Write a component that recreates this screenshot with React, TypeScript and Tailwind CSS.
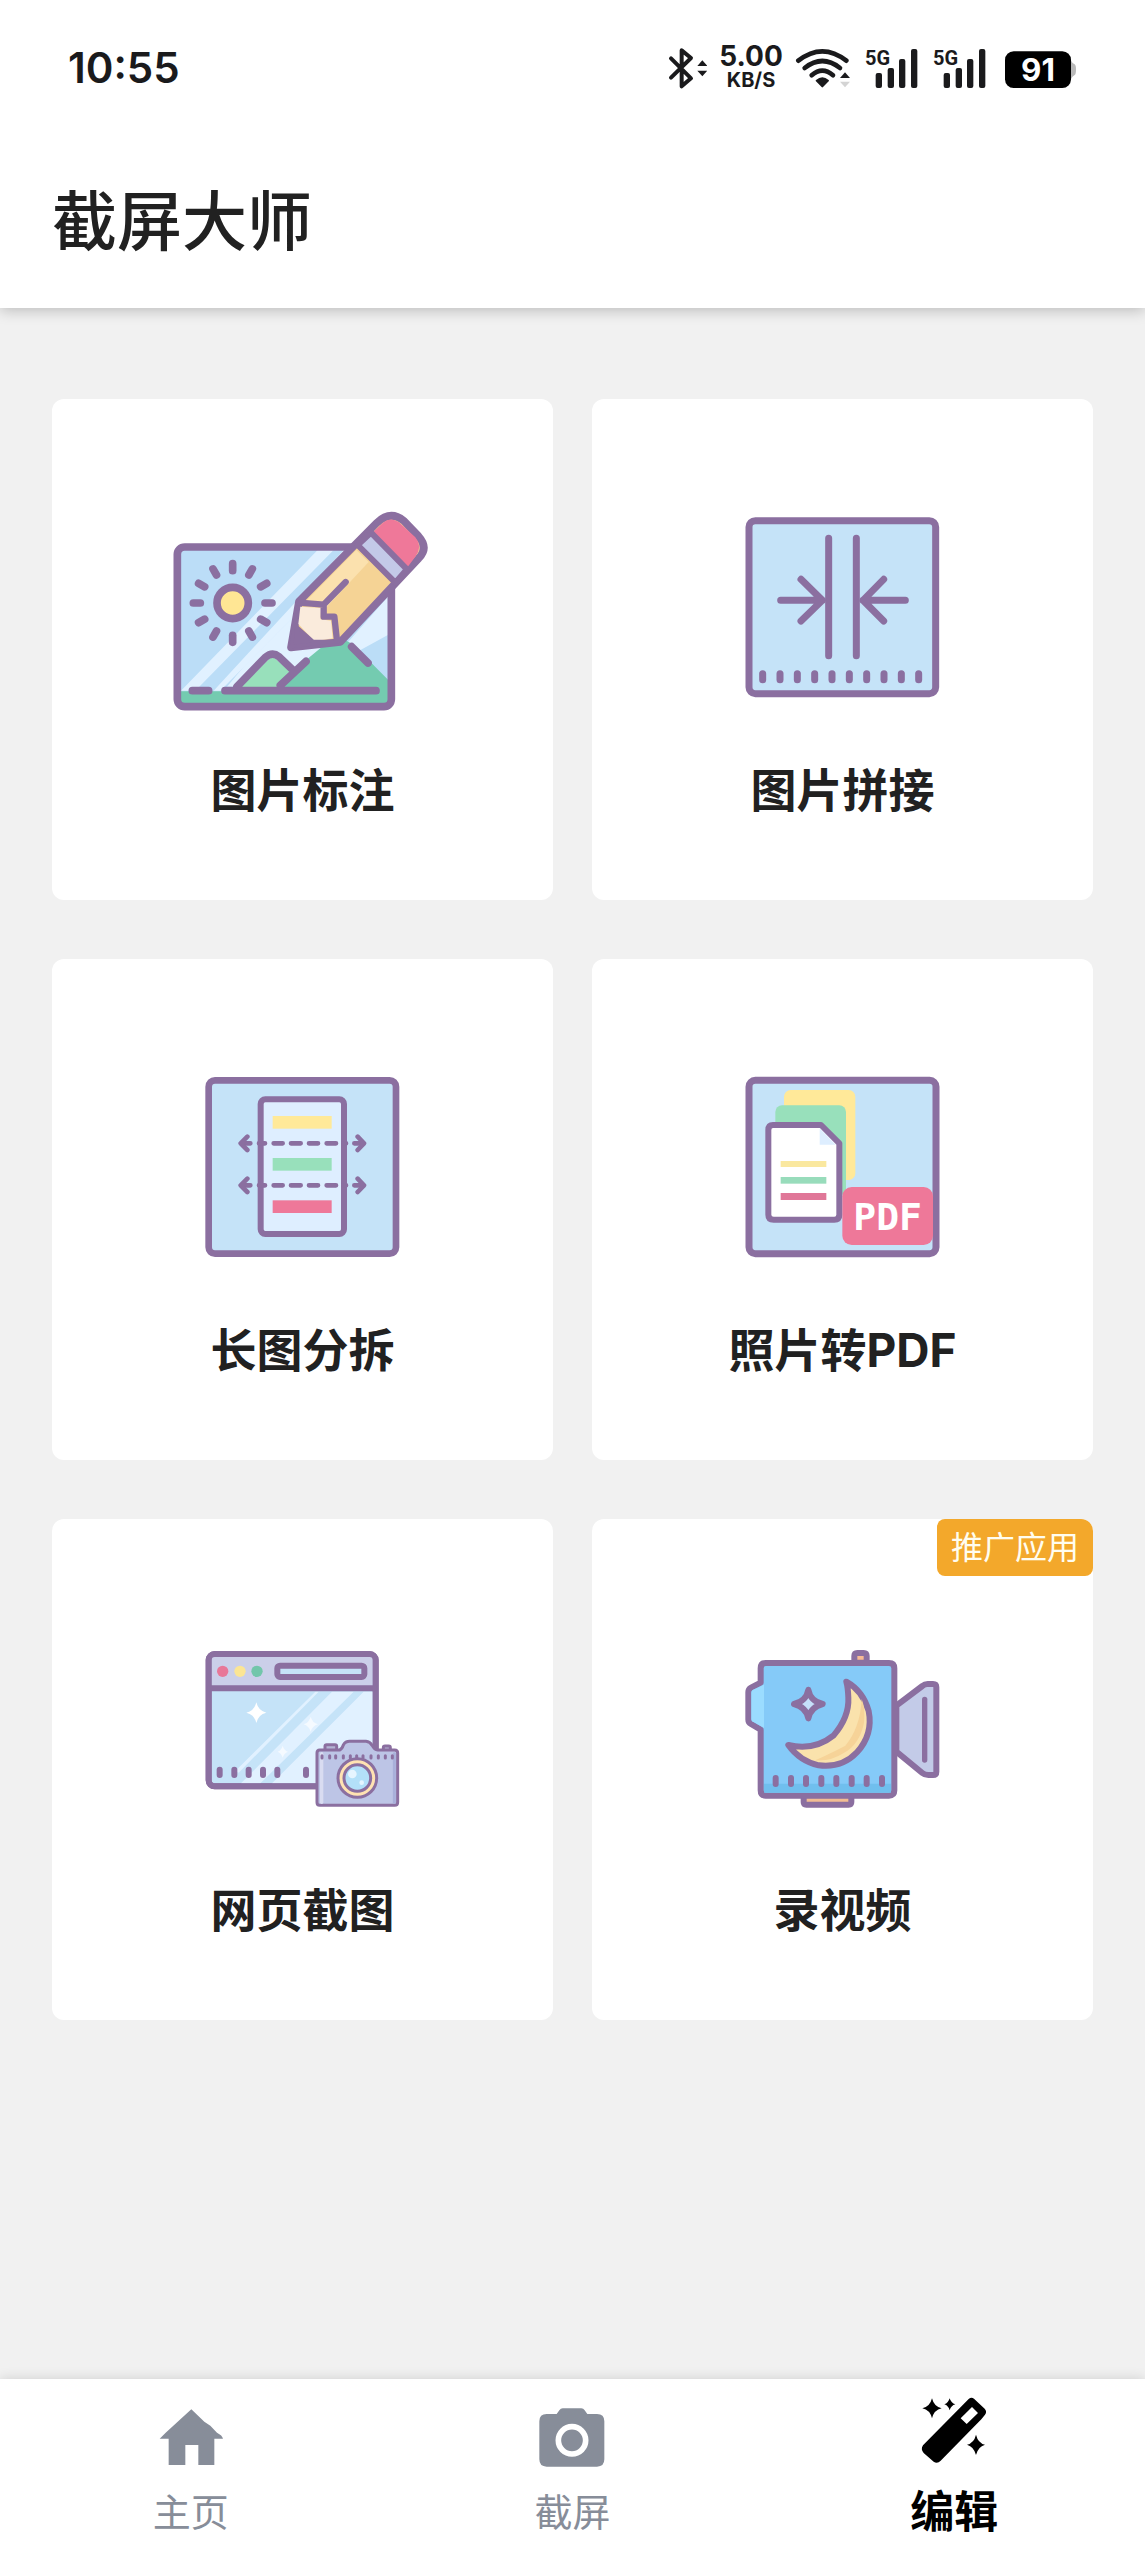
import React, { useState } from "react";

const PURPLE = "#8b6fa0";
const SKY = "#c5e3f8";

function Bluetooth() {
    return (
        <svg className="h-14 w-10" viewBox="54 -2 120 168" fill="none" stroke="#1a1a1c" strokeWidth="12" strokeLinecap="round" strokeLinejoin="round">
            <path d="M66 53 L126 113 L98 137 V29 L126 52 L66 111" />
            <path d="M160 59 L175 76 H145 Z M160 107 L175 90 H145 Z" fill="#1a1a1c" stroke="none" />
        </svg>
    );
}

function Wifi() {
    return (
        <svg className="h-14 w-14" viewBox="438 -2 168 168" fill="none" stroke="#1a1a1c" strokeWidth="14" strokeLinecap="round">
            <path d="M448 60 Q520 4 592 60" />
            <path d="M467 82 Q520 40 573 82" />
            <path d="M488 104 Q520 76 552 104" />
            <path d="M503 120 Q520 106 537 120 L520 137 Z" fill="#1a1a1c" strokeWidth="6" strokeLinejoin="round" />
            <path d="M588 95 L603 112 H573 Z" fill="#1a1a1c" stroke="none" />
            <path d="M588 140 L603 123 H573 Z" fill="#d4d4d4" stroke="none" />
        </svg>
    );
}

function Signal() {
    return (
        <svg className="h-14 w-14" viewBox="642 -2 168 168">
            <text x="648" y="72" fontSize="60" fontWeight="700" fontFamily="'Liberation Sans Narrow', Roboto, sans-serif" fill="#1a1a1c">5G</text>
            <g fill="#1a1a1c">
                <rect x="680" y="97" width="19" height="45" rx="6" />
                <rect x="716" y="82" width="19" height="60" rx="6" />
                <rect x="750" y="55" width="19" height="87" rx="6" />
                <rect x="786" y="25" width="19" height="117" rx="6" />
            </g>
        </svg>
    );
}

function Battery() {
    return (
        <svg className="h-14 w-[78px]" viewBox="1050 -2 234 168">
            <path d="M1262 44 Q1266 68 1277 71 Q1281 74 1281 87 Q1281 100 1277 103 Q1266 108 1262 128 Z" fill="#b9b9b9" />
            <rect x="1068" y="32" width="198" height="110" rx="26" fill="#000" />
            <text x="1167" y="121" textAnchor="middle" fontSize="94" fontWeight="700" fontFamily="Inter, sans-serif" fill="#fff">91</text>
        </svg>
    );
}

function AnnotateIcon() {
    const rays = [0, 30, 60, 90, 120, 150, 180, 210, 240, 270, 300, 330];
    return (
        <svg className="h-52 w-[260px]" viewBox="38 12 780 624" fill="none" stroke={PURPLE} strokeWidth="23" strokeLinecap="round" strokeLinejoin="round">
            <rect x="51" y="141" width="642" height="479" rx="22" fill="#bbddf7" stroke="none" />
            <g stroke="none">
                <path d="M472 150 H520 L105 572 H62 Z M550 150 H600 L180 572 H160 Z" fill="#e1f1ff" />
                <path d="M410 340 L250 500 L200 560 H400 L692 400 V280 L560 430 H390 Z" fill="#e1f1ff" />
                <path d="M62 574 H240 L340 560 L480 445 Q535 395 585 440 L692 548 V610 H62 Z" fill="#74cbb0" />
                <path d="M240 562 L335 468 L392 515 L350 562 Z" fill="#98e0bb" />
            </g>
            <rect x="51" y="141" width="642" height="479" rx="22" />
            <circle cx="217" cy="309" r="47" fill="#ffe694" />
            {rays.map((deg) => (
                <path key={deg} d="M217 191 V212" transform={`rotate(${deg} 217 309)`} />
            ))}
            <path d="M230 560 L315 472 Q336 454 356 470 L400 512 M360 556 L437 484 M574 440 L623 489 M96 572 H145 M194 572 H647" />
            <path d="M392 442 L416 304 L650 68 Q690 30 730 62 L774 108 Q806 144 775 175 L540 426 Z" fill="#f5d395" />
            <path d="M440 300 L588 150 L625 186 L500 320 Z" fill="#fbe1ae" stroke="none" />
            <path d="M420 320 L483 324 L480 358 L512 362 L517 415 L462 424 L414 372 Z" fill="#faebdc" stroke="none" />
            <path d="M394 440 L400 372 L458 424 L520 424 Z" fill={PURPLE} strokeWidth="10" />
            <path d="M626 108 L668 68 Q690 50 715 66 L765 112 Q788 140 765 170 L735 210 Z" fill="#ef7899" stroke="none" />
            <path d="M592 135 L705 248 L740 208 L632 98 Z" fill="#c3c9e8" strokeWidth="18" />
            <path d="M416 308 L490 314 L556 246 M490 314 V350 H522 L530 422" strokeWidth="19" />
        </svg>
    );
}

function StitchIcon() {
    return (
        <svg className="h-52 w-[260px]" viewBox="-22 12 780 624" fill="none" stroke={PURPLE} strokeWidth="21" strokeLinecap="round" strokeLinejoin="round">
            <rect x="86" y="62" width="560" height="519" rx="19" fill={SKY} />
            <path d="M325 115 V467 M408 115 V467" />
            <path d="M181 301 H306 M242 238 L306 301 L242 363 M555 301 H428 M490 238 L428 301 L490 363" />
            {[127, 179, 231, 283, 335, 387, 439, 491, 543, 595].map((x) => (
                <path key={x} d={`M${x} 521 V539`} />
            ))}
        </svg>
    );
}

function SplitIcon() {
    return (
        <svg className="h-52 w-[260px]" viewBox="-22 12 780 624" fill="none" stroke={PURPLE} strokeWidth="20" strokeLinecap="round" strokeLinejoin="round">
            <rect x="85" y="61" width="562" height="520" rx="19" fill={SKY} />
            <rect x="241" y="118" width="250" height="404" rx="14" fill="#deeeff" strokeWidth="18" />
            <rect x="277" y="168" width="177" height="38" fill="#ffe999" stroke="none" />
            <rect x="277" y="294" width="177" height="38" fill="#98e0bb" stroke="none" />
            <rect x="277" y="421" width="177" height="38" fill="#ee7899" stroke="none" />
            {[250, 376].map((y) => (
                <g key={y} strokeWidth="14">
                    <path d={`M190 ${y} H210 M236 ${y} H254 M280 ${y} H307 M332 ${y} H361 M386 ${y} H413 M439 ${y} H467 M490 ${y} H497 M522 ${y} H540`} />
                    <path d={`M201 ${y - 20} L181 ${y} L201 ${y + 20} M532 ${y - 20} L551 ${y} L532 ${y + 20}`} />
                </g>
            ))}
        </svg>
    );
}

function PdfIcon() {
    return (
        <svg className="h-52 w-[260px]" viewBox="8 12 780 624">
            <rect x="116" y="61" width="561" height="520" rx="19" fill={SKY} stroke={PURPLE} strokeWidth="21" />
            <rect x="221" y="90" width="214" height="270" rx="20" fill="#ffe999" />
            <rect x="195" y="136" width="212" height="270" rx="20" fill="#98e0bb" />
            <path d="M188 195 H332 L387 250 V464 Q387 479 372 479 H190 Q174 479 174 464 V210 Q174 195 188 195 Z" fill="#fff" stroke={PURPLE} strokeWidth="18" strokeLinejoin="round" />
            <path d="M328 205 L376 254 H328 Z" fill="#deeeff" />
            <rect x="211" y="303" width="137" height="18" fill="#fae89f" />
            <rect x="211" y="351" width="137" height="20" fill="#98dcbb" />
            <rect x="211" y="399" width="137" height="21" fill="#e07798" />
            <rect x="396" y="381" width="272" height="174" rx="28" fill="#ee7899" />
            <text x="532" y="509" textAnchor="middle" fontSize="114" fontWeight="700" fontFamily="'DejaVu Sans Mono', monospace" fill="#fff">PDF</text>
        </svg>
    );
}

function WebShotIcon() {
    return (
        <svg className="h-52 w-[260px]" viewBox="-22 -21 780 624" fill="none" stroke={PURPLE} strokeWidth="18" strokeLinecap="round" strokeLinejoin="round">
            <rect x="85" y="69" width="501" height="397" rx="18" fill={SKY} />
            <path d="M94 78 H577 V168 H94 Z" fill="#cbcfe9" stroke="none" />
            <path d="M405 182 H415 L175 425 L165 420 Z M455 182 H520 L240 457 H182 Z M550 182 H577 V457 H275 Z" fill="#e1f1ff" stroke="none" />
            <rect x="85" y="69" width="501" height="397" rx="18" />
            <path d="M90 172 H580" />
            <g stroke="none">
                <circle cx="127" cy="121" r="17" fill="#e87798" />
                <circle cx="179" cy="121" r="17" fill="#fbe594" />
                <circle cx="230" cy="121" r="17" fill="#72c6aa" />
                <path d="M228 214 Q234 240 258 245 Q234 250 228 276 Q222 250 198 245 Q222 240 228 214 Z" fill="#fff" />
                <path d="M391 257 Q396 275 413 280 Q396 285 391 302 Q386 285 370 280 Q386 275 391 257 Z M307 344 Q311 358 323 362 Q311 366 307 380 Q303 366 292 362 Q303 358 307 344 Z" fill="#f5faff" />
            </g>
            <rect x="291" y="104" width="261" height="34" rx="8" fill={SKY} />
            {[118, 162, 205, 248, 291, 377].map((x) => (
                <path key={x} d={`M${x} 416 V432`} />
            ))}
            <g strokeWidth="9">
                <rect x="434" y="341" width="35" height="20" rx="5" fill="#b3b4d4" />
                <rect x="609" y="345" width="21" height="16" rx="5" fill="#b3b4d4" />
                <path d="M418 357 H478 Q485 354 489 342 Q495 331 508 331 H557 Q569 332 576 344 Q582 356 592 357 H643 Q652 357 652 366 V514 Q652 523 643 523 H418 Q410 523 410 514 V366 Q410 357 418 357 Z" fill="#bdc5e6" />
                <path d="M424 368 V514" stroke="#d9dcf1" strokeWidth="10" />
                <path d="M642 368 V514" stroke="#a9b0da" strokeWidth="9" />
                {[425, 448, 466, 489, 510, 529, 548, 572, 594, 615, 636].map((x) => (
                    <path key={x} d={`M${x} 374 V381`} />
                ))}
                <circle cx="531" cy="441" r="58" fill="#ffe2b2" />
                <circle cx="531" cy="441" r="40" fill="#b3e0f9" />
            </g>
            <circle cx="516" cy="429" r="13" fill="#e6f5ff" stroke="none" />
            <circle cx="544" cy="455" r="7" fill="#e6f5ff" stroke="none" />
        </svg>
    );
}

function VideoIcon() {
    return (
        <svg className="h-52 w-[260px]" viewBox="8 369 780 624" fill="none" stroke={PURPLE} strokeWidth="18" strokeLinecap="round" strokeLinejoin="round">
            <path d="M280 880 V903 Q280 911 288 911 H415 Q423 911 423 903 V880 Z" fill="#f2bd93" />
            <path d="M432 485 V465 Q432 456 441 456 H460 Q469 456 469 465 V485 Z" fill="#f8bb94" />
            <path d="M558 614 L636 555 Q643 549 652 549 H668 Q678 549 678 559 V812 Q678 822 668 822 H654 Q643 822 636 816 L558 752 Z" fill="#c3cbe8" />
            <path d="M643 595 V777" strokeWidth="16" />
            <path d="M166 486 H536 Q552 486 552 502 V868 Q552 884 536 884 H166 Q151 884 151 868 V686 L122 669 Q114 664 114 656 V574 Q114 564 122 560 L151 545 V502 Q151 486 166 486 Z" fill="#85caf8" />
            <path d="M161 551 V681 L126 661 Q123 658 123 654 V576 Q123 570 127 567 Z" fill="#9bdcff" stroke="none" />
            <path d="M161 848 H542 V875 H161 Z" fill="#70bfee" stroke="none" />
            <path d="M408 542 Q458 570 475 630 Q489 700 440 754 Q395 802 325 793 Q268 780 234 732 Q312 750 370 703 Q417 648 414 590 Q413 560 408 542 Z" fill="#fae2ac" />
            <path d="M454 594 Q465 620 461 665 Q448 730 400 756 Q360 782 315 778 Q375 750 405 734 Q450 680 454 594 Z" fill="#f6d398" stroke="none" />
            <path d="M294 566 Q300 600 337 609 Q301 618 294 652 Q287 618 251 609 Q288 600 294 566 Z" fill="#c5dffa" />
            {[196, 242, 287, 333, 378, 424, 469, 515].map((x) => (
                <path key={x} d={`M${x} 831 V849`} />
            ))}
        </svg>
    );
}

function HomeIcon() {
    return (
        <svg className="size-18" viewBox="74 108 216 216" fill="currentColor">
            <path d="M183 148 L222 185 L240 197 L260 218 Q276 226 278 236 H252 V315 H204 V255 H165 V315 H115 V236 H88 L106 218 Z" />
        </svg>
    );
}

function CameraIcon() {
    return (
        <svg className="size-18" viewBox="1220 108 216 216" fill="currentColor">
            <path d="M1300 145 H1356 Q1362 145 1366 151 L1374 162 H1403 Q1425 162 1425 184 V298 Q1425 320 1403 320 H1252 Q1230 320 1230 298 V184 Q1230 162 1252 162 H1282 L1290 151 Q1294 145 1300 145 Z" />
            <circle cx="1328" cy="241" r="41" stroke="#fff" strokeWidth="17" />
        </svg>
    );
}

function WandIcon() {
    return (
        <svg className="size-18" viewBox="204 108 216 216" fill="currentColor">
            <path fillRule="evenodd" d="M356 117 Q364 110 372 116 L404 146 Q412 155 405 164 L394 178 L272 302 Q262 313 251 305 L221 279 Q211 268 219 256 Z M366 141 L332 175 L350 192 L384 159 Z" />
            <path d="M246 115 Q252 140 275 145 Q252 150 246 175 Q240 150 217 145 Q240 140 246 115 Z" />
            <path d="M299 115 Q303 129 316 133 Q303 137 299 151 Q295 137 283 133 Q295 129 299 115 Z" />
            <path d="M378 224 Q384 249 405 254 Q384 260 378 285 Q372 260 351 254 Q372 249 378 224 Z" />
        </svg>
    );
}

const tools = [
    { name: "图片标注", icon: <AnnotateIcon /> },
    { name: "图片拼接", icon: <StitchIcon /> },
    { name: "长图分拆", icon: <SplitIcon /> },
    { name: "照片转PDF", icon: <PdfIcon /> },
    { name: "网页截图", icon: <WebShotIcon /> },
    { name: "录视频", icon: <VideoIcon />, badge: "推广应用" },
];

const tabs = [
    { id: "home", name: "主页", icon: <HomeIcon /> },
    { id: "capture", name: "截屏", icon: <CameraIcon /> },
    { id: "edit", name: "编辑", icon: <WandIcon /> },
];

function StatusBar() {
    return (
        <div className="flex h-14 items-center justify-between px-[68px] font-[Inter,sans-serif] text-[#1a1a1c]">
            <span className="text-[42px] leading-14 font-semibold">10:55</span>
            <div className="flex items-center gap-3">
                <Bluetooth />
                <div className="flex w-16 flex-col items-center gap-1 font-bold">
                    <span className="text-[28px] leading-5">5.00</span>
                    <span className="text-[20px] leading-5">KB/S</span>
                </div>
                <Wifi />
                <Signal />
                <Signal />
                <Battery />
            </div>
        </div>
    );
}

function App() {
    const [tab, changeTab] = useState("edit");

    return (
        <div className="flex min-h-screen flex-col bg-[#f1f1f1] font-[Inter,'Noto_Sans_CJK_SC',sans-serif] text-[#212121]">
            <header className="relative bg-white py-10 shadow-[0_2px_14px_rgba(0,0,0,0.24)]">
                <StatusBar />
                <h1 className="mt-[76px] px-[52px] pt-1 text-[65px] leading-23 font-medium">截屏大师</h1>
            </header>
            <main className="grid flex-1 grid-cols-2 content-start gap-x-[39px] gap-y-[59px] px-[52px] pt-[91px] pb-14">
                {tools.map((tool) => (
                    <button key={tool.name} className="relative flex aspect-square flex-col items-center rounded-[12px] bg-white pt-[105px]">
                        {tool.icon}
                        <span className="mt-[46px] text-[46px] leading-16 font-bold">{tool.name}</span>
                        {tool.badge && (
                            <span className="absolute top-0 right-0 rounded-lg rounded-tr-[12px] bg-[#f3a82b] px-[14px] text-[32px] leading-[57px] text-[#fffdf0]">
                                {tool.badge}
                            </span>
                        )}
                    </button>
                ))}
            </main>
            <nav className="relative grid grid-cols-3 bg-white pt-[17px] pb-6 shadow-[0_0_12px_rgba(0,0,0,0.14)]">
                {tabs.map((item) => (
                    <a
                        key={item.id}
                        href={"#" + item.id}
                        onClick={() => changeTab(item.id)}
                        className={"flex flex-col items-center gap-5 leading-12 " + (tab === item.id ? "text-[44px] font-bold text-black" : "text-[38px] text-[#878d99]")}
                    >
                        {item.icon}
                        <span>{item.name}</span>
                    </a>
                ))}
            </nav>
        </div>
    );
}

export default App;
